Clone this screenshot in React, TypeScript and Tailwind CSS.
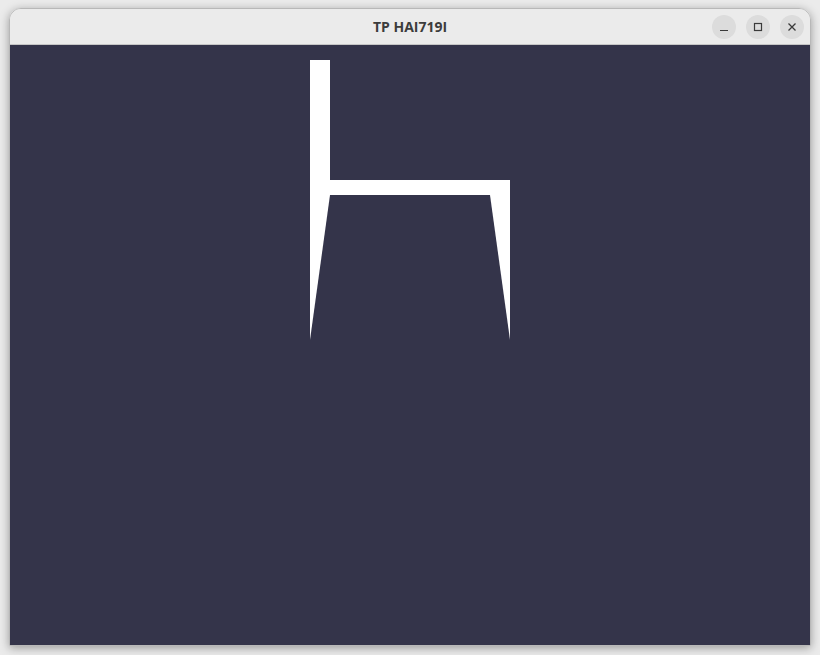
export default function App() {
  return (
    <div className="w-[820px] h-[655px] bg-[#ebebeb] pt-[8px] pl-[9px] font-['Open_Sans',sans-serif]">
      <div className="w-[802px] h-[638px] flex flex-col rounded-t-[12px] overflow-hidden border border-[#b8b8b8] shadow-[0_2px_10px_rgba(0,0,0,0.35)]">
        <div className="h-[36px] bg-[#ebebeb] border-b border-[#c6c6c6] flex items-center relative shrink-0">
          <div className="flex-1 text-center text-[14px] font-bold text-[#3c3c3c]">TP HAI719I</div>
          <div className="absolute right-[6px] top-[6px] flex gap-[10px]">
            <div className="w-[24px] h-[24px] rounded-full bg-[#dcdcdc] flex items-center justify-center">
              <svg width="10" height="10" viewBox="0 0 10 10"><path d="M1 8.5h8" stroke="#3a3a3a" strokeWidth="1.2" /></svg>
            </div>
            <div className="w-[24px] h-[24px] rounded-full bg-[#dcdcdc] flex items-center justify-center">
              <svg width="10" height="10" viewBox="0 0 10 10"><rect x="1.5" y="1.5" width="7" height="7" fill="none" stroke="#3a3a3a" strokeWidth="1.2" /></svg>
            </div>
            <div className="w-[24px] h-[24px] rounded-full bg-[#dcdcdc] flex items-center justify-center">
              <svg width="10" height="10" viewBox="0 0 10 10"><path d="M1.5 1.5l7 7M8.5 1.5l-7 7" stroke="#3a3a3a" strokeWidth="1.3" /></svg>
            </div>
          </div>
        </div>
        <div className="flex-1 bg-[#34344a]">
          <svg width="800" height="600" viewBox="0 0 800 600" className="block">
            <rect x="300" y="15" width="20" height="135" fill="#fff" />
            <rect x="300" y="135" width="200" height="15" fill="#fff" />
            <polygon points="300,150 320,150 300,295" fill="#fff" />
            <polygon points="480,150 500,150 500,295" fill="#fff" />
          </svg>
        </div>
      </div>
    </div>
  );
}
